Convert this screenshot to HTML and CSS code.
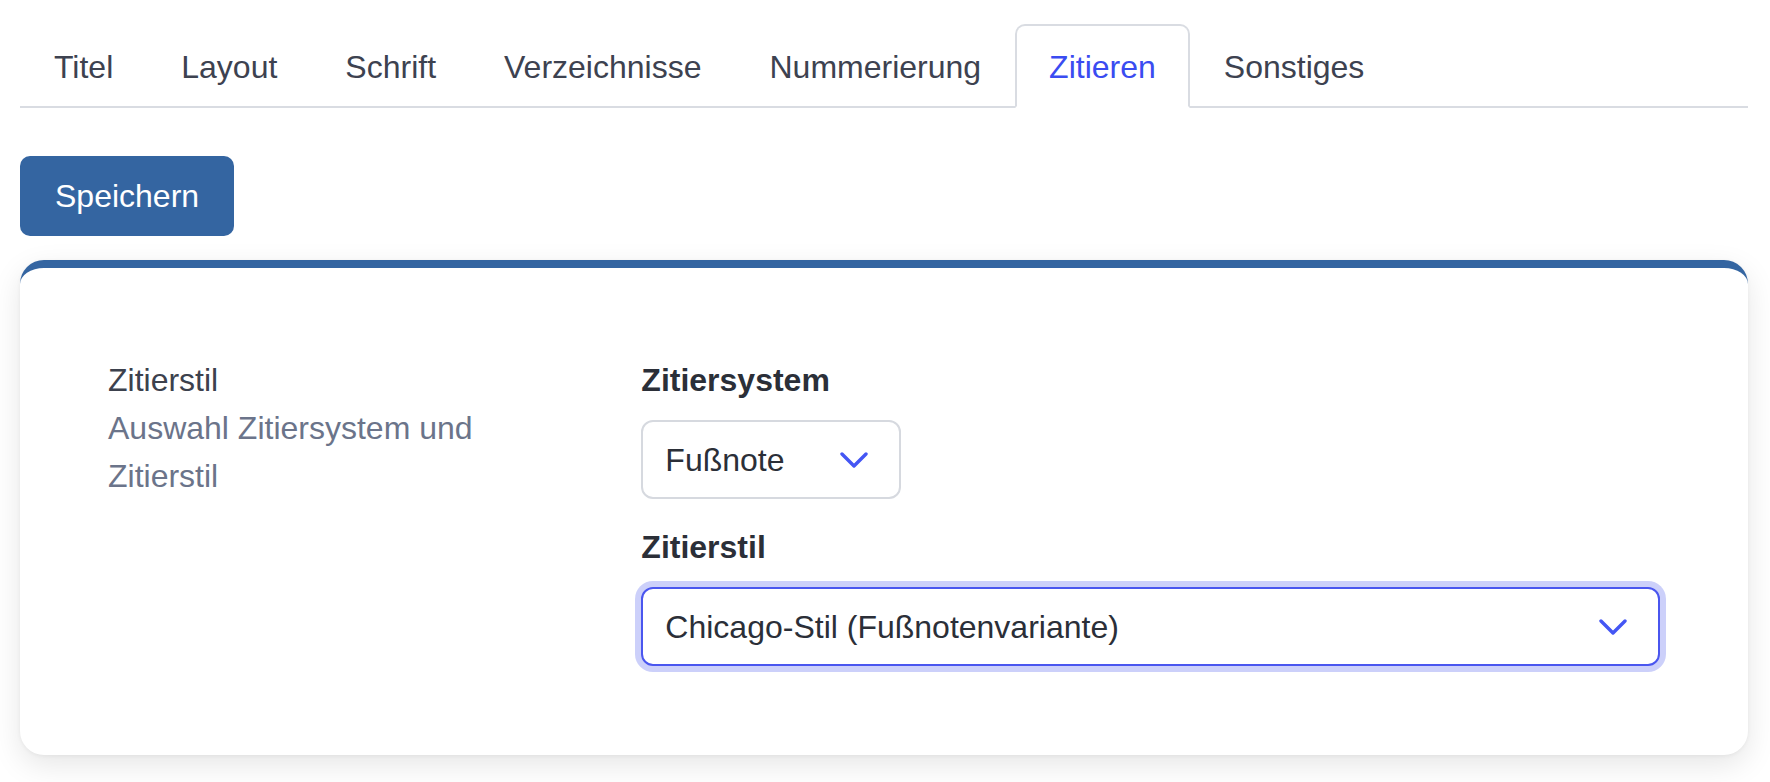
FILE: index.html
```html
<!DOCTYPE html>
<html lang="de">
<head>
<meta charset="utf-8">
<title>Zitieren</title>
<link rel="stylesheet" href="styles.css">
</head>
<body>
<div class="page">
  <nav class="tabs">
    <a class="tab">Titel</a>
    <a class="tab">Layout</a>
    <a class="tab">Schrift</a>
    <a class="tab">Verzeichnisse</a>
    <a class="tab">Nummerierung</a>
    <a class="tab active">Zitieren</a>
    <a class="tab">Sonstiges</a>
  </nav>

  <div class="actions">
    <button class="btn">Speichern</button>
  </div>

  <section class="card">
    <div class="card-grid">
      <div class="intro">
        <div class="intro-title">Zitierstil</div>
        <div class="intro-desc">Auswahl Zitiersystem und Zitierstil</div>
      </div>
      <div class="fields">
        <div class="field">
          <div class="label">Zitiersystem</div>
          <div class="select select-sm">
            <span>Fußnote</span>
            <svg class="chev" width="28" height="16" viewBox="0 0 28 16"><path d="M2 2 L14 14 L26 2" fill="none" stroke="#4456f4" stroke-width="3.4" stroke-linecap="round" stroke-linejoin="round"/></svg>
          </div>
        </div>
        <div class="field">
          <div class="label">Zitierstil</div>
          <div class="select select-focus">
            <span>Chicago-Stil (Fußnotenvariante)</span>
            <svg class="chev" width="28" height="16" viewBox="0 0 28 16"><path d="M2 2 L14 14 L26 2" fill="none" stroke="#4456f4" stroke-width="3.4" stroke-linecap="round" stroke-linejoin="round"/></svg>
          </div>
        </div>
      </div>
    </div>
  </section>
</div>
</body>
</html>
```

FILE: styles.css
```css
* {
  box-sizing: border-box;
}

html,
body {
  background: #ffffff;
}

body {
  margin: 0;
  min-height: 782px;
  font-family: "Liberation Sans", Arial, Helvetica, sans-serif;
  font-size: 32px;
  line-height: 48px;
  color: #2b2f38;
}

.page {
  padding: 24px 22px 30px 20px;
}

.tabs {
  display: flex;
  border-bottom: 2px solid #d9dce2;
}

.tab {
  display: block;
  padding: 17px 32px 15px;
  border: 2px solid transparent;
  border-radius: 10px 10px 0 0;
  margin-bottom: -2px;
  color: #3d4250;
  cursor: pointer;
}

.tab.active {
  border-color: #d9dce2;
  border-bottom-color: #ffffff;
  background: #ffffff;
  color: #3a4cf1;
}

.actions {
  margin-top: 48px;
}

.btn {
  display: inline-block;
  border: none;
  border-radius: 10px;
  background: #3465a1;
  color: #ffffff;
  font-family: inherit;
  font-size: 32px;
  line-height: 48px;
  padding: 16px 35px;
  cursor: pointer;
}

.card {
  margin-top: 24px;
  background: #ffffff;
  border-top: 8px solid #3465a1;
  border-radius: 24px;
  box-shadow: 0 10px 30px rgba(0, 0, 0, 0.1), 0 1px 4px rgba(0, 0, 0, 0.05);
  padding: 88px 88px 89px;
}

.card-grid {
  display: grid;
  grid-template-columns: repeat(3, 1fr);
  column-gap: 48px;
}

.intro-title {
  color: #3c414d;
}

.intro-desc {
  color: #6b748a;
  max-width: 420px;
}

.fields {
  grid-column: span 2;
}

.field + .field {
  margin-top: 24px;
}

.label {
  font-weight: 700;
  color: #2b2f38;
}

.select {
  margin-top: 16px;
  display: flex;
  align-items: center;
  justify-content: space-between;
  height: 79px;
  padding: 0 31px 0 22px;
  border: 2px solid #d6d9df;
  border-radius: 12px;
  background: #ffffff;
  color: #2b2f38;
}

.select-sm {
  width: 260px;
}

.select-focus {
  border-color: #4a56ef;
  box-shadow: 0 0 0 6px #ccd0fa;
}

.chev {
  display: block;
  flex: none;
}
```
